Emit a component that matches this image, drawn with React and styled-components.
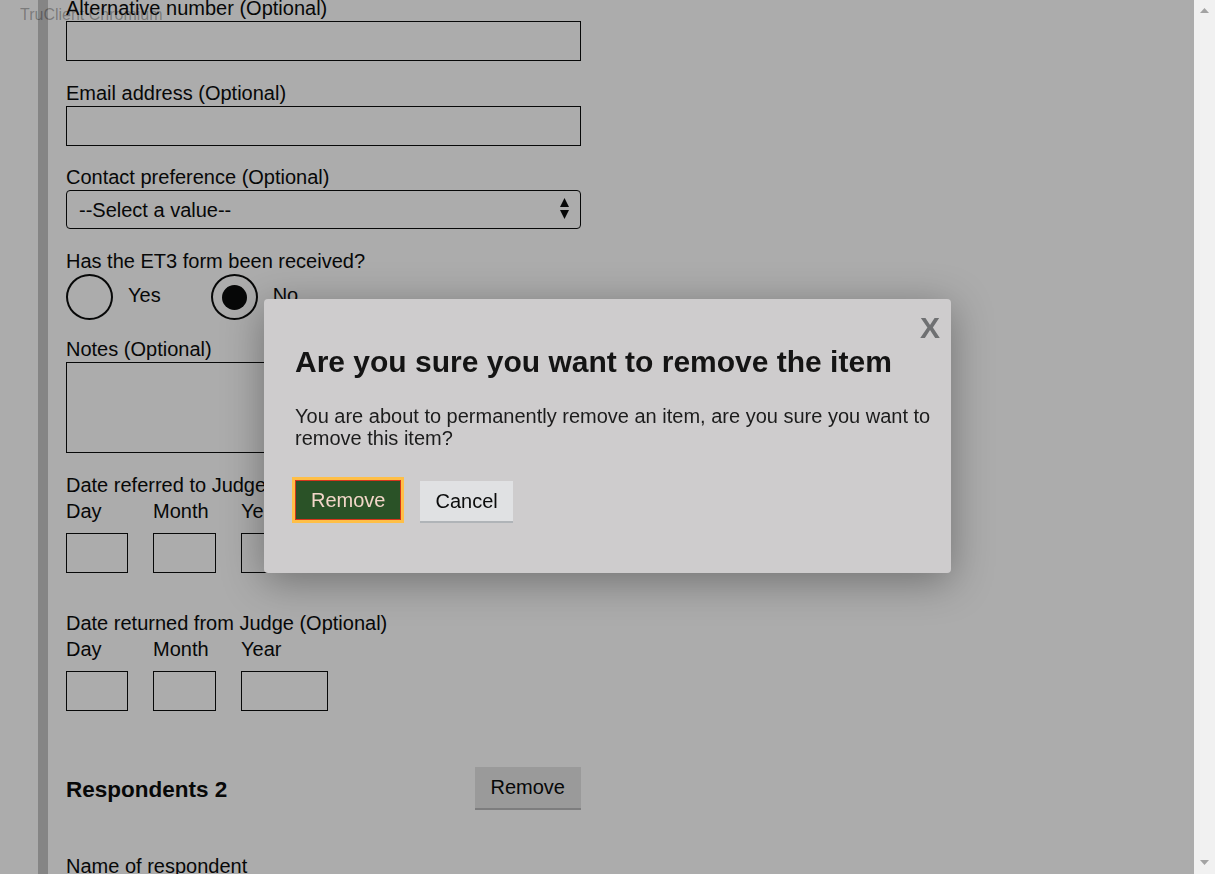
import styled, {createGlobalStyle} from "styled-components";

const GlobalStyle = createGlobalStyle`
    html, body {
        margin: 0;
        height: 100%;
        overflow: hidden;
    }
    body {
        font-family: "Liberation Sans", Arial, sans-serif;
        color: #0b0c0c;
    }
`;

const Viewport = styled.div`
    display: flex;
    width: 100vw;
    height: 100vh;
`;

const PageArea = styled.div`
    flex: 1;
    position: relative;
    overflow: hidden;
    background: #fff;
`;

const Page = styled.div`
    padding-left: 38px;
    margin-top: -4px;
`;

const Content = styled.div`
    border-left: 10px solid #c5c5c5;
    padding-left: 18px;
    padding-bottom: 200px;
`;

const FormGroup = styled.div`
    margin-bottom: ${(p) => p.$bottom || 20}px;
`;

const Label = styled.label`
    display: block;
    font-size: 20px;
    line-height: 25px;
`;

const TextInput = styled.input`
    display: block;
    box-sizing: border-box;
    width: ${(p) => p.$width || 515}px;
    height: ${(p) => p.$height || 40}px;
    margin: 0;
    border: 1px solid #0b0c0c;
    background: transparent;
    font: inherit;
    font-size: 20px;
`;

const TextArea = styled.textarea`
    display: block;
    box-sizing: border-box;
    width: 515px;
    height: 91px;
    margin: 0;
    border: 1px solid #0b0c0c;
    background: transparent;
    resize: none;
    font: inherit;
`;

const SelectWrap = styled.div`
    position: relative;
    width: 515px;
`;

const Select = styled.select`
    display: block;
    box-sizing: border-box;
    width: 100%;
    height: 39px;
    margin: 0;
    padding: 0 0 0 12px;
    border: 1px solid #0b0c0c;
    border-radius: 4px;
    background: transparent;
    appearance: none;
    font-family: "Liberation Sans", Arial, sans-serif;
    font-size: 20px;
    color: #0b0c0c;
`;

const SelectArrow = styled.svg`
    position: absolute;
    right: 12px;
    top: 8px;
    pointer-events: none;
`;

const RadioRow = styled.div`
    display: flex;
    gap: 50px;
`;

const RadioItem = styled.div`
    display: flex;
    align-items: center;
    gap: 15px;
    font-size: 20px;

    & > span:last-child {
        margin-bottom: 4px;
    }
`;

const RadioCircle = styled.span`
    box-sizing: border-box;
    width: 47px;
    height: 46px;
    border: 2px solid #0b0c0c;
    border-radius: 50%;
    display: flex;
    align-items: center;
    justify-content: center;

    &::after {
        content: "";
        width: 25px;
        height: 25px;
        border-radius: 50%;
        background: #0b0c0c;
        display: ${(p) => (p.$checked ? "block" : "none")};
    }
`;

const Legend = styled.div`
    font-size: 20px;
    line-height: 25px;
    margin-bottom: 1px;
`;

const DateRow = styled.div`
    display: flex;
    gap: 25px;
`;

const DateItem = styled.div`
    display: flex;
    flex-direction: column;
    gap: 9px;
`;

const SectionHeader = styled.div`
    display: flex;
    justify-content: space-between;
    align-items: center;
    width: 515px;
    margin: 56px 0 46px;
`;

const SectionTitle = styled.h2`
    margin: 4px 0 0;
    font-size: 22.5px;
    font-weight: bold;
`;

const SecondaryButton = styled.button`
    height: ${(p) => p.$height || 41}px;
    padding: 0 ${(p) => p.$pad || 16}px;
    border: none;
    background: ${(p) => p.$bg || "#e4e4e5"};
    box-shadow: 0 2px 0 ${(p) => p.$shadow || "#b9b9bb"};
    font-family: "Liberation Sans", Arial, sans-serif;
    font-size: 20px;
    color: #0b0c0c;
`;

const PrimaryButton = styled.button`
    box-sizing: border-box;
    height: 40px;
    margin-top: -1px;
    padding: 0 15px;
    border: 1px solid #d4351c;
    background: #2a5227;
    box-shadow: 0 0 0 3px #ffbf47;
    font-family: "Liberation Sans", Arial, sans-serif;
    font-size: 20px;
    color: #f2d6c8;
`;

const Backdrop = styled.div`
    position: absolute;
    inset: 0;
    background: rgba(0, 0, 0, 0.325);
`;

const Watermark = styled.div`
    position: absolute;
    top: 7px;
    left: 20px;
    font-size: 16px;
    line-height: 16px;
    color: rgba(0, 0, 0, 0.3);
`;

const Scrollbar = styled.div`
    width: 21px;
    background: #f1f1f1;
    display: flex;
    flex-direction: column;
    justify-content: space-between;
    align-items: center;
    padding: 8px 0 9px;
    box-sizing: border-box;
`;

const ModalLayer = styled.div`
    position: fixed;
    inset: 0;
    display: flex;
    align-items: center;
    justify-content: center;
    pointer-events: none;
`;

const Dialog = styled.div`
    position: relative;
    box-sizing: border-box;
    width: 687px;
    padding: 45px 18px 50px 31px;
    margin-top: -2px;
    background: #cecccd;
    border-radius: 4px;
    box-shadow: 0 8px 40px rgba(0, 0, 0, 0.35);
    pointer-events: auto;
`;

const CloseButton = styled.span`
    position: absolute;
    top: 14px;
    right: 11px;
    font-size: 30px;
    line-height: 30px;
    font-weight: bold;
    color: #6f7072;
`;

const DialogTitle = styled.h2`
    margin: 0 0 25px;
    font-size: 30px;
    line-height: 36px;
    font-weight: bold;
    color: #141414;
`;

const DialogText = styled.p`
    margin: 0 0 32px;
    font-size: 20px;
    line-height: 22px;
    color: #1c1c1c;
`;

const ButtonRow = styled.div`
    display: flex;
    gap: 19px;
    height: 42px;
`;

function DateField({label}) {
    return (
        <FormGroup $bottom={38}>
            <Legend>{label}</Legend>
            <DateRow>
                <DateItem><Label>Day</Label><TextInput $width={62}/></DateItem>
                <DateItem><Label>Month</Label><TextInput $width={63}/></DateItem>
                <DateItem><Label>Year</Label><TextInput $width={87}/></DateItem>
            </DateRow>
        </FormGroup>
    );
}

function ScrollArrow({down}) {
    return (
        <svg width="9" height="5" viewBox="0 0 9 5">
            <polygon points={down ? "0,0 9,0 4.5,5" : "4.5,0 9,5 0,5"} fill="#a3a3a3"/>
        </svg>
    );
}

export default function App() {
    return (
        <>
            <GlobalStyle/>
            <Viewport>
                <PageArea>
                    <Page>
                        <Content>
                            <FormGroup>
                                <Label>Alternative number (Optional)</Label>
                                <TextInput/>
                            </FormGroup>
                            <FormGroup $bottom={19}>
                                <Label>Email address (Optional)</Label>
                                <TextInput/>
                            </FormGroup>
                            <FormGroup>
                                <Label>Contact preference (Optional)</Label>
                                <SelectWrap>
                                    <Select defaultValue="">
                                        <option value="">--Select a value--</option>
                                    </Select>
                                    <SelectArrow width="9" height="22" viewBox="0 0 9 22">
                                        <polygon points="4.5,0 9,9 0,9" fill="#0b0c0c"/>
                                        <polygon points="0,12 9,12 4.5,21" fill="#0b0c0c"/>
                                    </SelectArrow>
                                </SelectWrap>
                            </FormGroup>
                            <FormGroup $bottom={17}>
                                <Label>Has the ET3 form been received?</Label>
                                <RadioRow>
                                    <RadioItem><RadioCircle/><span>Yes</span></RadioItem>
                                    <RadioItem><RadioCircle $checked/><span>No</span></RadioItem>
                                </RadioRow>
                            </FormGroup>
                            <FormGroup>
                                <Label>Notes (Optional)</Label>
                                <TextArea/>
                            </FormGroup>
                            <DateField label="Date referred to Judge (Optional)"/>
                            <DateField label="Date returned from Judge (Optional)"/>
                            <SectionHeader>
                                <SectionTitle>Respondents 2</SectionTitle>
                                <SecondaryButton>Remove</SecondaryButton>
                            </SectionHeader>
                            <FormGroup>
                                <Label>Name of respondent</Label>
                                <TextInput/>
                            </FormGroup>
                        </Content>
                    </Page>
                    <Backdrop/>
                    <Watermark>TruClient Chromium</Watermark>
                </PageArea>
                <Scrollbar>
                    <ScrollArrow/>
                    <ScrollArrow down/>
                </Scrollbar>
            </Viewport>
            <ModalLayer>
                <Dialog>
                    <CloseButton>X</CloseButton>
                    <DialogTitle>Are you sure you want to remove the item</DialogTitle>
                    <DialogText>
                        You are about to permanently remove an item, are you sure you want to remove this item?
                    </DialogText>
                    <ButtonRow>
                        <PrimaryButton>Remove</PrimaryButton>
                        <SecondaryButton $height={40} $pad={15} $bg="#e0e1e3" $shadow="#b0b4b8">Cancel</SecondaryButton>
                    </ButtonRow>
                </Dialog>
            </ModalLayer>
        </>
    );
}
